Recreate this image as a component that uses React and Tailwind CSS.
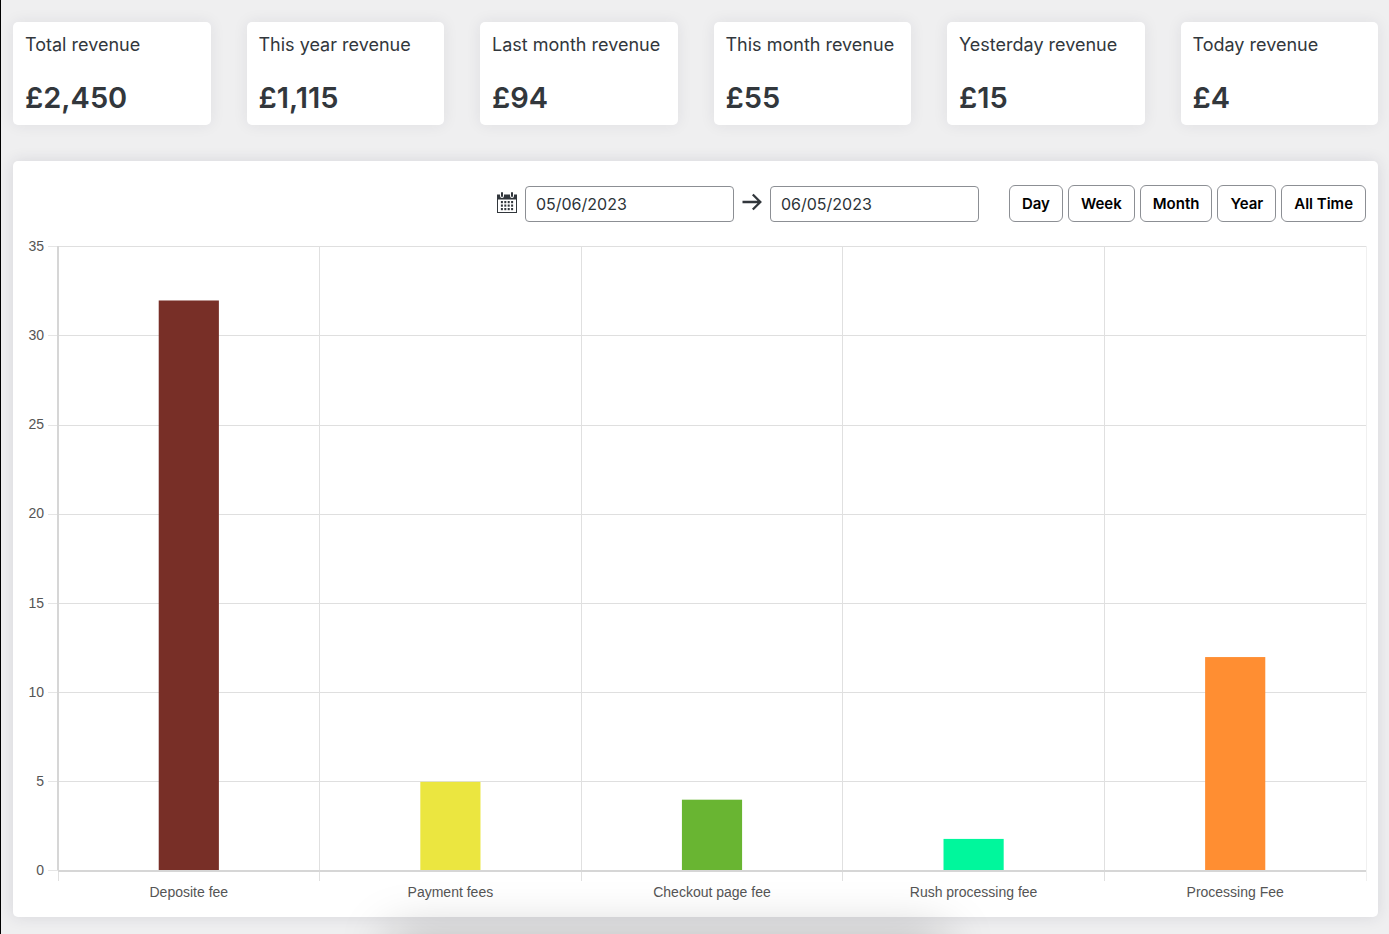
import React from "react";

const stats = [
  { label: "Total revenue", value: "£2,450" },
  { label: "This year revenue", value: "£1,115" },
  { label: "Last month revenue", value: "£94" },
  { label: "This month revenue", value: "£55" },
  { label: "Yesterday revenue", value: "£15" },
  { label: "Today revenue", value: "£4" },
];

const ranges = ["Day", "Week", "Month", "Year", "All Time"];

const fees = [
  { label: "Deposite fee", value: 32, color: "#782f27" },
  { label: "Payment fees", value: 5, color: "#ebe640" },
  { label: "Checkout page fee", value: 4, color: "#69b532" },
  { label: "Rush processing fee", value: 1.8, color: "#00f79c" },
  { label: "Processing Fee", value: 12, color: "#ff8e32" },
];

const MAX = 35;
const PLOT_HEIGHT = 624;
const ticks = [0, 5, 10, 15, 20, 25, 30, 35];
const yOf = (value) => PLOT_HEIGHT - (value / MAX) * PLOT_HEIGHT;

function StatCard({ label, value }) {
  return (
    <div className="rounded-[5px] bg-white px-3 py-[9px] shadow-[0_0_15px_rgba(40,40,70,0.08)]">
      <h2 className="whitespace-nowrap text-[18px] leading-7">{label}</h2>
      <p className="mt-[21px] text-[29px] font-semibold leading-9">{value}</p>
    </div>
  );
}

function CalendarIcon() {
  return (
    <svg className="mb-1" width="20" height="21" viewBox="0 0 20 21" aria-hidden="true">
      <path
        fillRule="evenodd"
        fill="#32373c"
        d="M0 2.500h3V4a2 2 0 0 0 4 0V2.500h6V4a2 2 0 0 0 4 0V2.500h3V21H0zM1 7.500V20h18V7.500z"
      />
      <rect x="4" y="0" width="2" height="5" rx="1" fill="#32373c" />
      <rect x="14" y="0" width="2" height="5" rx="1" fill="#32373c" />
      <g fill="#32373c">
        {[9, 12.5, 16].map((y) =>
          [3.9, 7.3, 10.7, 14.1].map((x) => (
            <rect key={`${x}-${y}`} x={x} y={y} width="2" height="2.200" />
          ))
        )}
      </g>
    </svg>
  );
}

function ArrowIcon() {
  return (
    <svg className="mb-1" width="20" height="18" viewBox="0 0 20 18" fill="none" stroke="#32373c" strokeWidth="2.300" aria-hidden="true">
      <path d="M0.500 9H18M10.800 1.500L18.300 9l-7.500 7.500" />
    </svg>
  );
}

function DateInput({ label, value }) {
  return (
    <input
      type="text"
      aria-label={label}
      defaultValue={value}
      className="h-9 w-[209px] rounded border border-[#8c8f94] bg-white px-2.5 text-[16px] text-[#2c3338]"
    />
  );
}

function FeeChart() {
  return (
    <div className="mt-6 pl-[33px] font-['Liberation_Sans',Arial,sans-serif] text-[14px] text-[#555]">
      <svg className="block h-[625px] w-full overflow-visible" role="img" aria-label="Fees by type">
        <g shapeRendering="crispEdges">
          {ticks.map((t) => (
            <React.Fragment key={t}>
              <line x1="-10" x2="0" y1={yOf(t) + 0.8} y2={yOf(t) + 0.8} stroke="#e5e5e5" />
              <line x1="0" x2="100%" y1={yOf(t) + 0.8} y2={yOf(t) + 0.8} stroke="#dfdfdf" />
            </React.Fragment>
          ))}
          {[0, 20, 40, 60, 80, 100].map((x) => (
            <line
              key={x}
              x1={`${x}%`}
              x2={`${x}%`}
              y1="0"
              y2={PLOT_HEIGHT + 11}
              stroke={x === 100 ? "#f0f0f0" : "#e0e0e0"}
            />
          ))}
        </g>
        {fees.map((fee, i) => (
          <rect
            key={fee.label}
            x={`${i * 20 + 7.7}%`}
            y={yOf(fee.value) + 1}
            width="4.6%"
            height={PLOT_HEIGHT - yOf(fee.value)}
            fill={fee.color}
          />
        ))}
        <g shapeRendering="crispEdges" stroke="#d6d6d6" strokeWidth="2">
          <line x1="0" x2="0" y1="0" y2={PLOT_HEIGHT} />
          <line x1="0" x2="100%" y1={PLOT_HEIGHT + 1} y2={PLOT_HEIGHT + 1} />
        </g>
        {ticks.map((t) => (
          <text key={t} x="-14" y={yOf(t) + 5} textAnchor="end" fill="#555">
            {t}
          </text>
        ))}
      </svg>
      <div className="mt-[11px] grid grid-cols-5 text-center leading-5">
        {fees.map((fee) => (
          <span key={fee.label}>{fee.label}</span>
        ))}
      </div>
    </div>
  );
}

export default function App() {
  return (
    <div className="relative min-h-screen overflow-hidden border-l border-black bg-[#efeff0] pb-4 pl-3 pr-[11px] pt-[22px] font-['Inter',sans-serif] text-[#32373c]">
      <section className="grid grid-cols-6 gap-9">
        {stats.map((s) => (
          <StatCard key={s.label} {...s} />
        ))}
      </section>

      <main className="mt-9 rounded-[5px] bg-white px-3 pb-[15px] pt-6 shadow-[0_0_15px_rgba(40,40,70,0.12)]">
        <div className="flex items-end justify-end">
          <div className="flex items-center gap-2">
            <CalendarIcon />
            <DateInput label="Start date" value="05/06/2023" />
            <ArrowIcon />
            <DateInput label="End date" value="06/05/2023" />
          </div>
          <div className="ml-[30px] flex gap-[5px]">
            {ranges.map((r) => (
              <button
                key={r}
                type="button"
                className="h-[37px] rounded-md border border-[#8c8f94] bg-white px-3 pt-0.5 text-[15px] font-semibold text-black"
              >
                {r}
              </button>
            ))}
          </div>
        </div>
        <FeeChart />
      </main>

      <div className="pointer-events-none absolute -bottom-10 left-[28%] right-[32%] h-10 rounded-lg shadow-[0_0_50px_rgba(0,0,0,0.25)]" />
    </div>
  );
}
